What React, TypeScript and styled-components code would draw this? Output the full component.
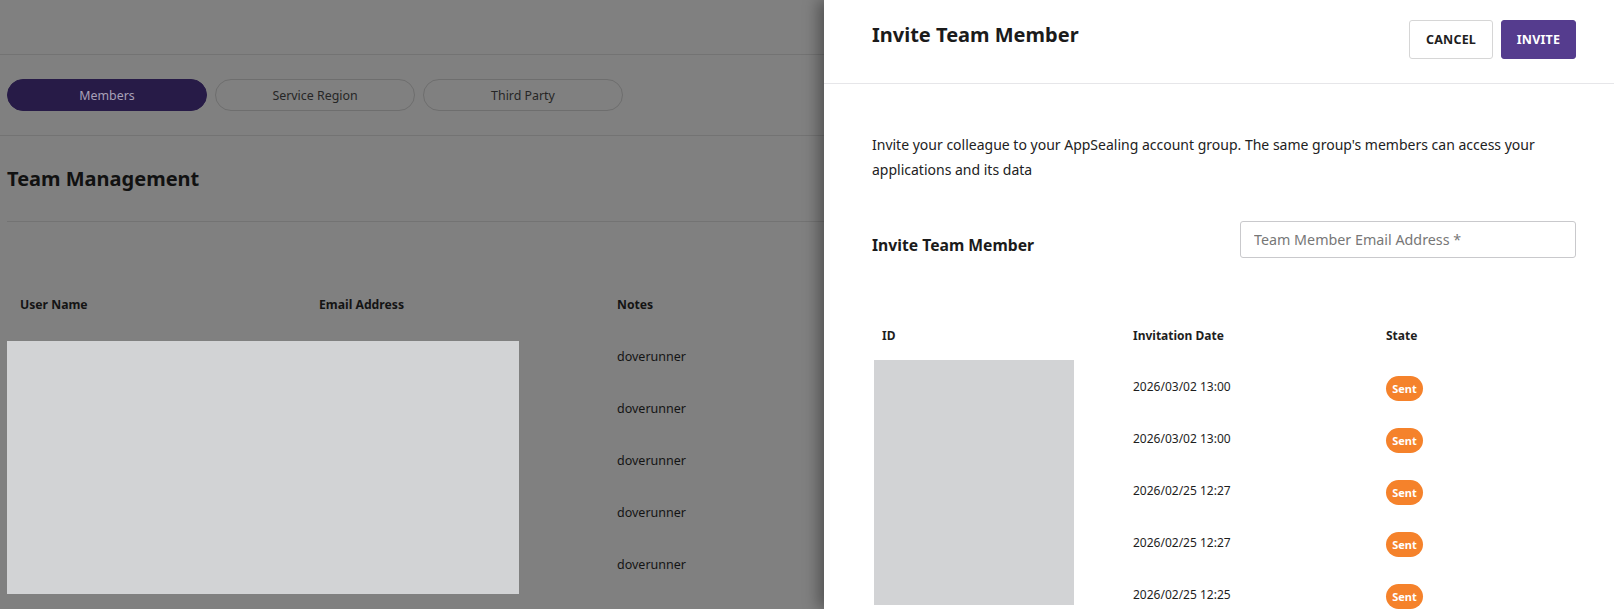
import styled, { createGlobalStyle } from "styled-components";

const GlobalStyle = createGlobalStyle`
  html, body {
    margin: 0;
    padding: 0;
  }
  body {
    font-family: "Noto Sans", "Open Sans", sans-serif;
    color: #222;
  }
  * { box-sizing: border-box; }
`;

const Screen = styled.div`
  display: flex;
  width: 1614px;
  height: 609px;
  overflow: hidden;
`;

/* page behind the drawer, already dimmed by the backdrop */
const Backdrop = styled.div`
  flex: 1;
  min-width: 0;
  background: #808080;
  color: #141414;
`;

const TopBar = styled.div`
  height: 55px;
  border-bottom: 1px solid #737373;
`;

const Tabs = styled.div`
  display: flex;
  gap: 8px;
  padding: 24px 7px 24px;
  border-bottom: 1px solid #737373;
`;

const Tab = styled.div<{ $active?: boolean }>`
  width: 200px;
  height: 32px;
  border-radius: 16px;
  display: flex;
  align-items: center;
  justify-content: center;
  font-size: 12.4px;
  color: ${(p) => (p.$active ? "#a7a0b8" : "#262626")};
  background: ${(p) => (p.$active ? "#271b47" : "transparent")};
  border: 1px solid ${(p) => (p.$active ? "#271b47" : "#6e6e6e")};
`;

const SectionTitle = styled.div`
  margin-left: 7px;
  height: 86px;
  display: flex;
  align-items: center;
  border-bottom: 1px solid #737373;
  font-size: 20px;
  font-weight: 700;
  color: #111;
`;

const MemberTable = styled.div`
  margin: 56px 0 0 7px;
`;

const MemberRow = styled.div<{ $head?: boolean }>`
  display: grid;
  grid-template-columns: 299px 298px 1fr;
  height: 52px;
  align-items: center;
  font-size: ${(p) => (p.$head ? "12.2px" : "12.5px")};
  font-weight: ${(p) => (p.$head ? 700 : 400)};
  span {
    padding-left: 13px;
    white-space: nowrap;
  }
`;

const Body = styled.div`
  position: relative;
`;

const Redacted = styled.div<{ $w: number; $h: number; $top: number; $left: number }>`
  position: absolute;
  top: ${(p) => p.$top}px;
  left: ${(p) => p.$left}px;
  width: ${(p) => p.$w}px;
  height: ${(p) => p.$h}px;
  background: #d2d3d5;
`;

const Drawer = styled.div`
  width: 790px;
  flex-shrink: 0;
  background: #fff;
  box-shadow: -6px 0 14px rgba(0, 0, 0, 0.35);
  position: relative;
`;

const DrawerHead = styled.div`
  height: 84px;
  padding: 20px 38px 0 48px;
  display: flex;
  justify-content: space-between;
  align-items: flex-start;
  border-bottom: 1px solid #e6e6e9;
`;

const DrawerTitle = styled.h2`
  margin: 0;
  font-size: 20px;
  line-height: 30px;
  font-weight: 700;
  color: #1b1b1b;
`;

const Actions = styled.div`
  display: flex;
  gap: 8px;
`;

const Button = styled.button<{ $primary?: boolean; $w: number }>`
  width: ${(p) => p.$w}px;
  height: 39px;
  padding: 0;
  border-radius: 3px;
  font-family: inherit;
  font-size: 12.5px;
  font-weight: 700;
  letter-spacing: 0.2px;
  cursor: pointer;
  border: 1px solid ${(p) => (p.$primary ? "#553c8e" : "#d6d6d6")};
  background: ${(p) => (p.$primary ? "#553c8e" : "#fff")};
  color: ${(p) => (p.$primary ? "#fff" : "#1e1e1e")};
`;

const DrawerBody = styled.div`
  padding: 48px 38px 0 48px;
`;

const Description = styled.p`
  margin: 0;
  font-size: 14px;
  line-height: 25px;
  color: #222;
`;

const FormRow = styled.div`
  margin-top: 39px;
  display: flex;
  justify-content: space-between;
  align-items: flex-start;
`;

const FieldLabel = styled.label`
  margin-top: 13px;
  font-size: 15.7px;
  line-height: 22px;
  font-weight: 700;
  color: #1b1b1b;
`;

const EmailInput = styled.input`
  width: 336px;
  height: 37px;
  border: 1px solid #c9c9cc;
  border-radius: 3px;
  padding: 0 13px;
  font-family: inherit;
  font-size: 14.3px;
  color: #222;
  &::placeholder {
    color: #777;
  }
`;

const InviteTable = styled.div`
  margin-top: 53px;
`;

const InviteRow = styled.div<{ $head?: boolean }>`
  display: grid;
  grid-template-columns: 261px 253px 1fr;
  height: ${(p) => (p.$head ? "49px" : "52px")};
  align-items: center;
  font-size: 12px;
  font-weight: ${(p) => (p.$head ? 700 : 400)};
  color: #1e1e1e;
  > span:first-child {
    padding-left: 10px;
  }
`;

const Badge = styled.span`
  display: inline-flex;
  align-items: center;
  justify-content: center;
  width: 37px;
  height: 25px;
  margin-top: 4px;
  border-radius: 13px;
  background: #f5822b;
  color: #fff;
  font-size: 11px;
  font-weight: 700;
`;

const members = ["doverunner", "doverunner", "doverunner", "doverunner", "doverunner"];
const invites = [
  "2026/03/02 13:00",
  "2026/03/02 13:00",
  "2026/02/25 12:27",
  "2026/02/25 12:27",
  "2026/02/25 12:25",
];

export default function App() {
  return (
    <Screen>
      <GlobalStyle />
      <Backdrop>
        <TopBar />
        <Tabs>
          <Tab $active>Members</Tab>
          <Tab>Service Region</Tab>
          <Tab>Third Party</Tab>
        </Tabs>
        <SectionTitle>Team Management</SectionTitle>
        <MemberTable>
          <MemberRow $head>
            <span>User Name</span>
            <span>Email Address</span>
            <span>Notes</span>
          </MemberRow>
          <Body>
            {members.map((note, i) => (
              <MemberRow key={i}>
                <span />
                <span />
                <span>{note}</span>
              </MemberRow>
            ))}
            <Redacted $top={11} $left={0} $w={512} $h={253} />
          </Body>
        </MemberTable>
      </Backdrop>
      <Drawer>
        <DrawerHead>
          <DrawerTitle>Invite Team Member</DrawerTitle>
          <Actions>
            <Button $w={84}>CANCEL</Button>
            <Button $w={75} $primary>
              INVITE
            </Button>
          </Actions>
        </DrawerHead>
        <DrawerBody>
          <Description>
            Invite your colleague to your AppSealing account group. The same group's members can access your
            applications and its data
          </Description>
          <FormRow>
            <FieldLabel>Invite Team Member</FieldLabel>
            <EmailInput placeholder="Team Member Email Address *" />
          </FormRow>
          <InviteTable>
            <InviteRow $head>
              <span>ID</span>
              <span>Invitation Date</span>
              <span>State</span>
            </InviteRow>
            <Body>
              {invites.map((date, i) => (
                <InviteRow key={i}>
                  <span />
                  <span>{date}</span>
                  <span>
                    <Badge>Sent</Badge>
                  </span>
                </InviteRow>
              ))}
              <Redacted $top={0} $left={2} $w={200} $h={245} />
            </Body>
          </InviteTable>
        </DrawerBody>
      </Drawer>
    </Screen>
  );
}
